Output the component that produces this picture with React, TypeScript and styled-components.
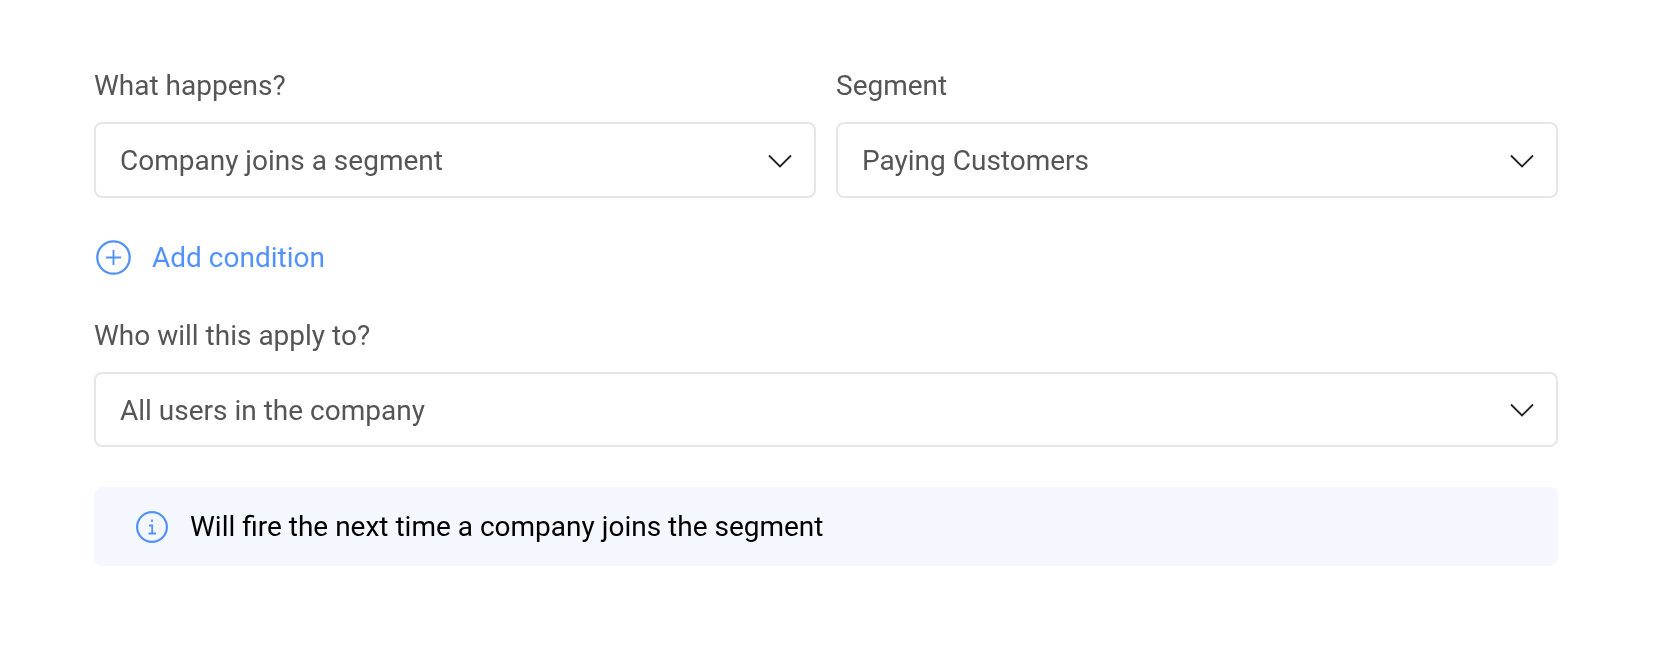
import React from "react";
import styled, { createGlobalStyle } from "styled-components";

const GlobalStyle = createGlobalStyle`
  html, body {
    margin: 0;
    padding: 0;
    background-color: #fff;
    font-family: Roboto, "Liberation Sans", sans-serif;
  }
`;

const Page = styled.div`
  width: 1656px;
  height: 666px;
  box-sizing: border-box;
  padding: 69px 98px 0 94px;
  transform: translateZ(0);
`;

const Row = styled.div`
  display: flex;
  gap: 20px;
`;

const Field = styled.div`
  flex: 1 1 0;
  min-width: 0;
`;

const Label = styled.div`
  height: 34px;
  line-height: 34px;
  font-size: 28px;
  color: #555;
  margin-bottom: 19px;
`;

const SelectBox = styled.div<{ $height: number }>`
  height: ${(props) => props.$height}px;
  box-sizing: border-box;
  display: flex;
  align-items: center;
  justify-content: space-between;
  padding: 1px 22px 0 24px;
  border: 2px solid #e6e6e6;
  border-radius: 8px;
  font-size: 28px;
  color: #555;
`;

const AddRow = styled.div`
  display: flex;
  align-items: center;
  gap: 21px;
  height: 36px;
  margin: 41px 0 44px 2px;
  color: #5492fb;
  font-size: 28px;
`;

const AddText = styled.span`
  margin-top: 1px;
`;

const Notice = styled.div`
  display: flex;
  align-items: center;
  gap: 22px;
  height: 79px;
  margin-top: 40px;
  padding-left: 42px;
  border-radius: 8px;
  background-color: #f4f7fe;
  color: #000;
  font-size: 28px;
`;

const Chevron = () => (
  <svg width="24" height="14" viewBox="0 0 24 14" fill="none">
    <path d="M1 1.5 L12 12.5 L23 1.5" stroke="#222" strokeWidth="1.8" />
  </svg>
);

const PlusIcon = () => (
  <svg width="35" height="35" viewBox="0 0 35 35" fill="none" stroke="#5492fb" strokeWidth="2.3">
    <circle cx="17.5" cy="17.5" r="16.2" />
    <path d="M17.5 10 V25 M10 17.5 H25" strokeWidth="1.9" />
  </svg>
);

const InfoIcon = () => (
  <svg width="32" height="32" viewBox="0 0 32 32" fill="none" stroke="#5492fb" strokeWidth="2.2">
    <circle cx="16" cy="16" r="14.9" />
    <path d="M16 8.5 V11 M13 14.5 H16.2 V22.5 M12.5 22.5 H20" strokeWidth="1.8" />
  </svg>
);

const Select = ({ value, height = 76 }: { value: string; height?: number }) => (
  <SelectBox $height={height}>
    {value}
    <Chevron />
  </SelectBox>
);

const App: React.FC = () => {
  return (
    <Page>
      <GlobalStyle />
      <Row>
        <Field>
          <Label>What happens?</Label>
          <Select value="Company joins a segment" />
        </Field>
        <Field>
          <Label>Segment</Label>
          <Select value="Paying Customers" />
        </Field>
      </Row>
      <AddRow>
        <PlusIcon />
        <AddText>Add condition</AddText>
      </AddRow>
      <Field>
        <Label>Who will this apply to?</Label>
        <Select value="All users in the company" height={75} />
      </Field>
      <Notice>
        <InfoIcon />
        Will fire the next time a company joins the segment
      </Notice>
    </Page>
  );
};

export default App;
